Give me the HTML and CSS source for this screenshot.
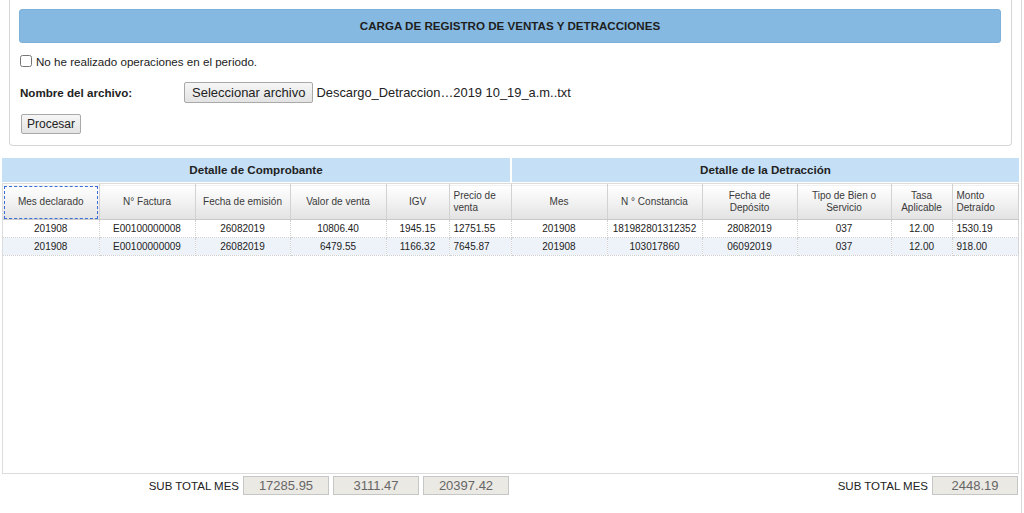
FILE: index.html
```html
<!DOCTYPE html>
<html lang="es">
<head>
<meta charset="utf-8">
<title>Carga de registro de ventas y detracciones</title>
<link rel="stylesheet" href="styles.css">
</head>
<body>
<div class="page">
  <div class="panel">
    <div class="title">CARGA DE REGISTRO DE VENTAS Y DETRACCIONES</div>
    <label class="check"><input type="checkbox" class="cb"><span>No he realizado operaciones en el periodo.</span></label>
    <div class="file-row">
      <span class="lbl">Nombre del archivo:</span>
      <span class="btn btn-file">Seleccionar archivo</span>
      <span class="fname">Descargo_Detraccion…2019 10_19_a.m..txt</span>
    </div>
    <div class="proc-row"><span class="btn btn-proc">Procesar</span></div>
  </div>

  <div class="grid">
    <div class="groups">
      <div class="group g1">Detalle de Comprobante</div>
      <div class="group g2">Detalle de la Detracción</div>
    </div>
    <div class="body">
      <table class="tbl">
        <colgroup>
          <col class="w96"><col class="w96"><col class="w95"><col class="w96"><col class="w63"><col class="w62">
          <col class="w96"><col class="w95"><col class="w95"><col class="w94"><col class="w61"><col class="w66">
        </colgroup>
        <thead>
          <tr>
            <th class="focus">Mes declarado</th>
            <th>N° Factura</th>
            <th>Fecha de emisión</th>
            <th>Valor de venta</th>
            <th>IGV</th>
            <th class="left">Precio de<br>venta</th>
            <th class="sep">Mes</th>
            <th>N ° Constancia</th>
            <th>Fecha de<br>Depósito</th>
            <th>Tipo de Bien o<br>Servicio</th>
            <th>Tasa<br>Aplicable</th>
            <th class="left">Monto<br>Detraído</th>
          </tr>
        </thead>
        <tbody>
          <tr>
            <td>201908</td><td>E00100000008</td><td>26082019</td><td>10806.40</td><td>1945.15</td><td class="left">12751.55</td>
            <td class="sep">201908</td><td>181982801312352</td><td>28082019</td><td>037</td><td>12.00</td><td class="left">1530.19</td>
          </tr>
          <tr class="alt">
            <td>201908</td><td>E00100000009</td><td>26082019</td><td>6479.55</td><td>1166.32</td><td class="left">7645.87</td>
            <td class="sep">201908</td><td>103017860</td><td>06092019</td><td>037</td><td>12.00</td><td class="left">918.00</td>
          </tr>
        </tbody>
      </table>
    </div>
    <div class="totals">
      <div class="tot-left">
        <span class="tot-lbl">SUB TOTAL MES</span>
        <span class="tot-box">17285.95</span>
        <span class="tot-box">3111.47</span>
        <span class="tot-box">20397.42</span>
      </div>
      <div class="tot-right">
        <span class="tot-lbl">SUB TOTAL MES</span>
        <span class="tot-box">2448.19</span>
      </div>
    </div>
  </div>
</div>
</body>
</html>
```

FILE: styles.css
```css
* { box-sizing: border-box; }

html, body {
  margin: 0;
  padding: 0;
  background: #ffffff;
}

body {
  font-family: "Liberation Sans", Arial, sans-serif;
  color: #222;
}

.page {
  width: 1022px;
  height: 513px;
  border-right: 1px solid #d9d9d9;
  overflow: hidden;
}

/* ---------- top panel ---------- */
.panel {
  margin: 0 9px 0 9px;
  border: 1px solid #d6d6d6;
  border-top: none;
  border-radius: 0 0 4px 4px;
  padding: 9px 10px 10px 9px;
  height: 146px;
}

.title {
  height: 34px;
  background: #86b9e1;
  border: 1px solid #7eb1d9;
  border-radius: 3px;
  font-size: 11.6px;
  font-weight: bold;
  color: #1e1e1e;
  text-align: center;
  line-height: 32px;
}

.check {
  display: flex;
  align-items: center;
  height: 16px;
  margin-top: 10px;
  font-size: 11.6px;
  color: #222;
}

.cb {
  width: 12px;
  height: 12px;
  margin: 0 4px 0 1px;
}

.file-row {
  display: flex;
  align-items: center;
  margin-top: 13px;
  height: 21px;
}

.lbl {
  width: 165px;
  padding-left: 1px;
  font-size: 11.6px;
  font-weight: bold;
  color: #222;
}

.btn {
  display: inline-block;
  border: 1px solid #a9a9a9;
  border-radius: 2px;
  background: linear-gradient(#f6f6f6, #e3e3e3);
  color: #222;
}

.btn-file {
  height: 21px;
  line-height: 19px;
  padding: 0 7px;
  font-size: 13px;
}

.fname {
  margin-left: 3px;
  font-size: 12.9px;
  color: #222;
}

.proc-row {
  margin-top: 11px;
  padding-left: 2px;
  height: 20px;
}

.btn-proc {
  height: 20px;
  line-height: 18px;
  padding: 0 5px;
  font-size: 12px;
}

/* ---------- grid ---------- */
.grid {
  margin: 12px 0 0 2px;
  width: 1017px;
}

.groups {
  display: flex;
  gap: 2px;
  height: 24px;
}

.group {
  background: #c5e0f6;
  font-size: 11.6px;
  font-weight: bold;
  color: #222;
  text-align: center;
  line-height: 24px;
}

.g1 { width: 508px; }
.g2 { flex: 1; }

.body {
  margin-top: 1px;
  height: 291px;
  border: 1px solid #dcdcdc;
}

.tbl {
  width: 1015px;
  table-layout: fixed;
  border-collapse: collapse;
}

.w96 { width: 96px; }
.w95 { width: 95px; }
.w94 { width: 94px; }
.w63 { width: 63px; }
.w62 { width: 62px; }
.w61 { width: 61px; }
.w66 { width: 66px; }

.tbl th {
  height: 35px;
  padding: 0 4px;
  background: linear-gradient(#ffffff 0%, #f3f3f3 45%, #e2e2e2 100%);
  border-right: 1px solid #d2d2d2;
  border-bottom: 1px solid #c9c9c9;
  border-top: 1px solid #ffffff;
  font-size: 10px;
  font-weight: normal;
  line-height: 12px;
  color: #3a3a3a;
  text-align: center;
  vertical-align: middle;
}

.tbl th.focus {
  outline: 1px dashed #3b6fd6;
  outline-offset: -2px;
}

.tbl td {
  height: 18px;
  padding: 0 4px;
  border-right: 1px dotted #cfcfcf;
  border-bottom: 1px dotted #cfcfcf;
  font-size: 10px;
  color: #222;
  text-align: center;
  white-space: nowrap;
  overflow: hidden;
}

.tbl .left { text-align: left; }

.tbl tr.alt td { background: #eef3fa; }

/* ---------- totals ---------- */
.totals {
  display: flex;
  margin-top: 2px;
  height: 19px;
}

.tot-left {
  width: 509px;
  display: flex;
  justify-content: flex-end;
  align-items: center;
  gap: 4px;
  padding-right: 2px;
}

.tot-right {
  flex: 1;
  display: flex;
  justify-content: flex-end;
  align-items: center;
  gap: 4px;
  padding-right: 1px;
}

.tot-lbl {
  font-size: 11.5px;
  color: #222;
}

.tot-box {
  width: 86px;
  height: 19px;
  line-height: 17px;
  border: 1px solid #c6c6c6;
  background: #ebe9e3;
  color: #666;
  font-size: 13px;
  text-align: center;
}
```
